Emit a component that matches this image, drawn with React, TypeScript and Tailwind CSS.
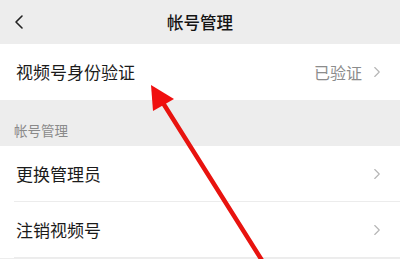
import { ChevronLeft, ChevronRight } from "lucide-react";

function Row({
  label,
  value,
  divider,
}: {
  label: string;
  value?: string;
  divider?: boolean;
}) {
  return (
    <div className="relative flex h-[56px] items-center bg-white pl-[16px] pr-[14px]">
      <span className="flex-1 text-[17px] text-[#1b1b1b]">{label}</span>
      {value && (
        <span className="mr-[6px] text-[16px] text-[#8c8c8c]">{value}</span>
      )}
      <ChevronRight
        className="h-[18px] w-[18px] text-[#b5b5b5]"
        strokeWidth={1.5}
      />
      {divider && (
        <div className="absolute bottom-0 left-[14px] right-0 h-px bg-[#ececec]" />
      )}
    </div>
  );
}

export default function App() {
  return (
    <div
      className="relative h-[259px] w-[400px] overflow-hidden bg-[#ededed]"
      style={{ fontFamily: '"Noto Sans CJK SC", "Noto Sans", sans-serif' }}
    >
      <header className="relative flex h-[44px] items-center justify-center">
        <ChevronLeft
          className="absolute left-[7px] top-[10px] h-[24px] w-[24px] text-[#222]"
          strokeWidth={1.6}
        />
        <h1 className="text-[16.5px] font-medium text-[#141414]">帐号管理</h1>
      </header>

      <Row label="视频号身份验证" value="已验证" />

      <div className="flex h-[46px] items-end pb-[6px] pl-[14px]">
        <span className="text-[13.5px] text-[#8a8a8a]">帐号管理</span>
      </div>

      <Row label="更换管理员" divider />
      <Row label="注销视频号" divider />

      <svg
        className="pointer-events-none absolute left-0 top-0"
        width="400"
        height="259"
        viewBox="0 0 400 259"
      >
        <line
          x1="163"
          y1="103"
          x2="263"
          y2="262"
          stroke="#e8130f"
          strokeWidth="4.5"
          strokeLinecap="round"
        />
        <polygon points="151,85 174,99 153,111" fill="#f01010" />
      </svg>
    </div>
  );
}
